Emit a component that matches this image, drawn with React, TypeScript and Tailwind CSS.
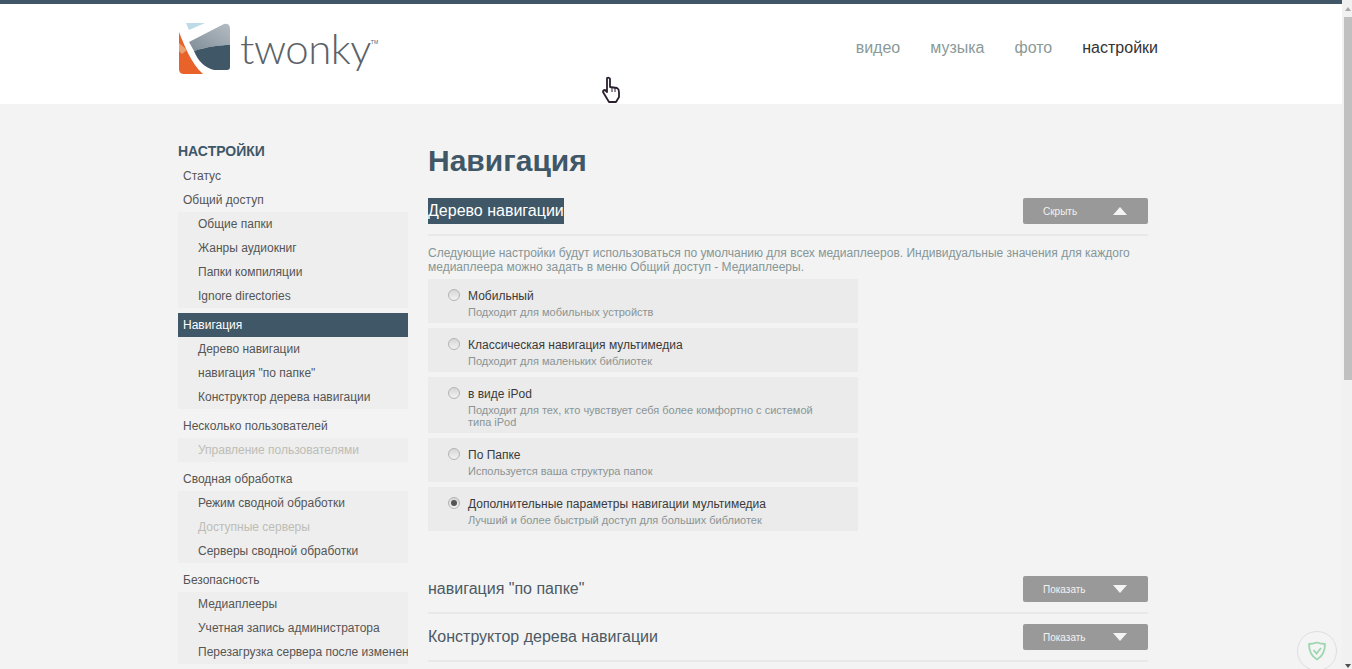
const FONT = "font-['Liberation_Sans',Arial,sans-serif]"

interface Item {
  label: string
  off?: boolean
}

interface Group {
  title: string
  active?: boolean
  items: Item[]
}

const GROUPS: Group[] = [
  { title: 'Статус', items: [] },
  {
    title: 'Общий доступ',
    items: [{ label: 'Общие папки' }, { label: 'Жанры аудиокниг' }, { label: 'Папки компиляции' }, { label: 'Ignore directories' }],
  },
  {
    title: 'Навигация',
    active: true,
    items: [{ label: 'Дерево навигации' }, { label: 'навигация "по папке"' }, { label: 'Конструктор дерева навигации' }],
  },
  { title: 'Несколько пользователей', items: [{ label: 'Управление пользователями', off: true }] },
  {
    title: 'Сводная обработка',
    items: [{ label: 'Режим сводной обработки' }, { label: 'Доступные серверы', off: true }, { label: 'Серверы сводной обработки' }],
  },
  {
    title: 'Безопасность',
    items: [{ label: 'Медиаплееры' }, { label: 'Учетная запись администратора' }, { label: 'Перезагрузка сервера после изменения' }],
  },
]

const OPTIONS = [
  { title: 'Мобильный', sub: 'Подходит для мобильных устройств' },
  { title: 'Классическая навигация мультимедиа', sub: 'Подходит для маленьких библиотек' },
  { title: 'в виде iPod', sub: 'Подходит для тех, кто чувствует себя более комфортно с системой типа iPod' },
  { title: 'По Папке', sub: 'Используется ваша структура папок' },
  { title: 'Дополнительные параметры навигации мультимедиа', sub: 'Лучший и более быстрый доступ для больших библиотек', checked: true },
]

function Logo() {
  return (
    <div className="flex items-center w-[200px] h-[52px]">
      <svg width="53" height="52" viewBox="0 0 53 52" className="shrink-0">
        <defs>
          <linearGradient id="sweep" x1="0" y1="1" x2="1" y2="0">
            <stop offset="0" stopColor="#7f8d97" />
            <stop offset="1" stopColor="#b5bcc2" />
          </linearGradient>
        </defs>
        <path d="M8 0 H27 L11 7 Z" fill="#bcdbe6" />
        <path d="M1 9 C7 24 13 40 25 51 H6 Q1 51 1 46 Z" fill="#e8622a" />
        <path d="M1 20 L9 27 L4 31 L1 28 Z" fill="#eda06f" />
        <path d="M11 19 L46 1 Q52 0 52 6 V22 C42 22 28 24 16 28 Z" fill="url(#sweep)" />
        <path d="M16 28 C28 24 42 22 52 22 V44 Q52 47 49 47 H36 C27 45 20 38 16 28 Z" fill="#3f5766" />
      </svg>
      <span className="font-['Lato',sans-serif] font-light text-[42px] leading-none text-[#5c6268] ml-[9px] mt-[-2px] tracking-[-0.5px]">twonky</span>
      <span className="self-start mt-[17px] text-[5px] leading-none text-[#5c6268]">TM</span>
    </div>
  )
}

function Sidebar() {
  return (
    <aside className="w-[230px] shrink-0 overflow-hidden">
      <h2 className="text-[14px] leading-[16px] font-bold text-[#3f5766] mb-[5px]">НАСТРОЙКИ</h2>
      {GROUPS.map(g => (
        <div key={g.title} className={g.items.length > 0 ? 'mb-[5px]' : ''}>
          <div className={`h-[24px] leading-[24px] px-[5px] text-[12px] ${g.active ? 'bg-[#3f5766] text-white' : 'text-[#555]'}`}>{g.title}</div>
          {g.items.length > 0 && (
            <ul className="bg-[#eeeeee]">
              {g.items.map(item => (
                <li key={item.label} className={`h-[24px] leading-[24px] pl-[20px] text-[12px] whitespace-nowrap overflow-hidden ${item.off ? 'text-[#bdbdb5]' : 'text-[#555]'}`}>
                  {item.label}
                </li>
              ))}
            </ul>
          )}
        </div>
      ))}
    </aside>
  )
}

function ToggleButton({ label, open }: { label: string; open?: boolean }) {
  return (
    <button className="w-[125px] h-[26px] bg-[#999999] rounded-[2px] flex items-center justify-between pl-[20px] pr-[21px] text-[10px] text-[#f2f2f2]">
      <span>{label}</span>
      <svg width="14" height="8" viewBox="0 0 14 8">
        <path d={open ? 'M7 0 L14 8 H0 Z' : 'M0 0 H14 L7 8 Z'} fill="#f5f5f5" />
      </svg>
    </button>
  )
}

function SectionHead({ title, selected, button, open }: { title: string; selected?: boolean; button: string; open?: boolean }) {
  return (
    <div className="flex items-start justify-between h-[38px] border-b-2 border-[#e8e8e8]">
      <span className={`text-[16px] leading-[26px] ${selected ? 'bg-[#3f5766] text-white' : 'text-[#4c5a64]'}`}>{title}</span>
      <ToggleButton label={button} open={open} />
    </div>
  )
}

function Radio({ checked }: { checked?: boolean }) {
  return (
    <span className="mt-[1px] w-[12px] h-[12px] rounded-full border border-[#b4b4b4] bg-gradient-to-b from-[#d6d6d6] to-[#f2f2f2] shrink-0 flex items-center justify-center">
      {checked && <span className="w-[6px] h-[6px] rounded-full bg-[#555]" />}
    </span>
  )
}

function OptionCard({ title, sub, checked }: { title: string; sub: string; checked?: boolean }) {
  return (
    <div className="w-[430px] bg-[#ebebeb] flex gap-[8px] pl-[20px] pr-[40px] pt-[9px] pb-[5px]">
      <Radio checked={checked} />
      <div>
        <div className="text-[12px] leading-[16px] text-[#3a3a3a]">{title}</div>
        <div className="text-[11px] leading-[12px] text-[#8a9494] mt-[2px]">{sub}</div>
      </div>
    </div>
  )
}

export default function App() {
  return (
    <div className={`${FONT} flex h-[669px] w-[1352px] overflow-hidden bg-[#f3f3f3]`}>
      <div className="w-[1342px] shrink-0">
        <header className="h-[104px] bg-white border-t-4 border-[#3f5766]">
          <div className="w-[980px] ml-[178px] flex items-center justify-between pt-[19px]">
            <Logo />
            <nav className="flex gap-[30px] text-[16px] mt-[-3px] text-[#8a9a97]">
              <span>видео</span>
              <span>музыка</span>
              <span>фото</span>
              <span className="text-[#333]">настройки</span>
            </nav>
          </div>
        </header>
        <div className="flex gap-[20px] pl-[178px] pt-[39px]">
          <Sidebar />
          <main className="w-[720px]">
            <h1 className="text-[30px] leading-[36px] font-bold text-[#3f5766] mb-[19px]">Навигация</h1>
            <SectionHead title="Дерево навигации" selected button="Скрыть" open />
            <p className="text-[12px] leading-[14px] text-[#859696] mt-[10px] mb-[5px]">
              Следующие настройки будут использоваться по умолчанию для всех медиаплееров. Индивидуальные значения для каждого медиаплеера можно задать в меню Общий доступ - Медиаплееры.
            </p>
            <div className="flex flex-col gap-[5px]">
              {OPTIONS.map(o => (
                <OptionCard key={o.title} {...o} />
              ))}
            </div>
            <div className="mt-[45px] flex flex-col gap-[10px]">
              <SectionHead title={'навигация "по папке"'} button="Показать" />
              <SectionHead title="Конструктор дерева навигации" button="Показать" />
            </div>
          </main>
        </div>
      </div>
      <div className="w-[10px] shrink-0 bg-[#f1f1f1] flex flex-col items-end">
        <div className="h-[17px] w-[8px] flex items-center justify-center">
          <svg width="6" height="4" viewBox="0 0 6 4"><path d="M3 0 L6 4 H0 Z" fill="#a8a8a8" /></svg>
        </div>
        <div className="w-[8px] h-[363px] bg-[#c0c0c0]" />
        <div className="mt-auto h-[6px] w-[8px] flex items-center justify-center">
          <svg width="6" height="4" viewBox="0 0 6 4"><path d="M0 0 H6 L3 4 Z" fill="#505050" /></svg>
        </div>
      </div>

      {/* cursor */}
      <svg width="20" height="28" viewBox="0 0 20 28" className="absolute left-[601px] top-[76px]">
        <path d="M6 2 Q8 1 9 3 V11 L16 12 Q18 13 18 16 V21 L15 26 H8 L2 16 Q2 14 4 14 L6 16 Z" fill="#fff" stroke="#2b2030" strokeWidth="1.8" strokeLinejoin="round" />
        <path d="M11 11 V16 M14 12 V16" stroke="#2b2030" strokeWidth="1" />
      </svg>

      {/* adblock badge */}
      <div className="absolute left-[1297px] top-[631px] w-[40px] h-[40px] rounded-full bg-[#f4f4f4] border border-[#dedede] flex items-center justify-center">
        <svg width="20" height="20" viewBox="0 0 20 20" fill="none">
          <path d="M10 1.5 C7 2.5 4.5 3 2 3 C2 10 4 15 10 18.5 C16 15 18 10 18 3 C15.5 3 13 2.5 10 1.5 Z" stroke="#9ed6b0" strokeWidth="1.8" strokeLinejoin="round" />
          <path d="M6.5 9 L9.5 12.5 L14 7" stroke="#9ed6b0" strokeWidth="1.8" />
        </svg>
      </div>
    </div>
  )
}
